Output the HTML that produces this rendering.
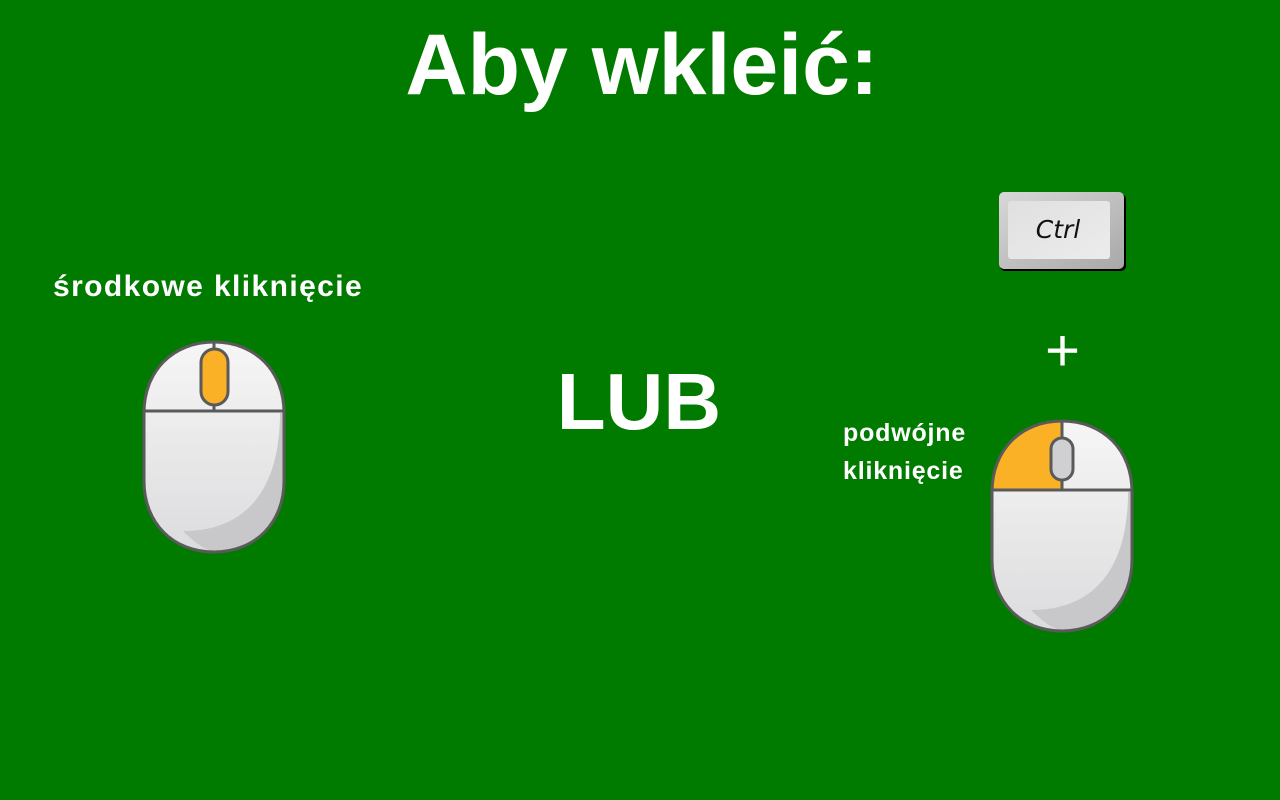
<!DOCTYPE html>
<html><head><meta charset="utf-8"><style>
body{margin:0;width:1280px;height:800px;background:#007b00;overflow:hidden;position:relative;font-family:"Liberation Sans",sans-serif;color:#fff;font-weight:bold}
.t{position:absolute;white-space:nowrap}
</style></head><body>
<div class="t" style="left:0;width:1284px;text-align:center;top:16px;font-size:86px;letter-spacing:0px">Aby wkleić:</div>
<div class="t" style="left:53px;top:270px;font-size:30px;letter-spacing:1.4px">środkowe kliknięcie</div>
<div class="t" style="left:0;width:1278px;text-align:center;top:356px;font-size:80px">LUB</div>
<div class="t" style="left:843px;top:414px;font-size:25px;line-height:38px;letter-spacing:0.8px">podwójne<br>kliknięcie</div>
<div class="t" style="left:1045px;top:316px;font-size:60px;font-weight:normal">+</div>

<svg style="position:absolute;left:998px;top:191px" width="130" height="82" viewBox="0 0 130 82">
<defs><linearGradient id="k" x1="0" y1="0" x2="1" y2="1"><stop offset="0" stop-color="#d8d8d8"/><stop offset="1" stop-color="#a8a8a8"/></linearGradient>
<linearGradient id="k2" x1="0" y1="0" x2="1" y2="1"><stop offset="0" stop-color="#e0e0e0"/><stop offset="1" stop-color="#ececec"/></linearGradient>
<linearGradient id="g" x1="0" y1="0" x2="0" y2="1"><stop offset="0" stop-color="#f6f6f6"/><stop offset="1" stop-color="#dcdcde"/></linearGradient></defs>
<rect x="2" y="3" width="126" height="77" rx="5" fill="#000"/>
<rect x="1" y="1" width="125" height="77" rx="5" fill="url(#k)"/>
<rect x="10" y="10" width="102" height="58" rx="3" fill="url(#k2)"/>
<text x="60" y="47" text-anchor="middle" font-family="DejaVu Sans,sans-serif" font-style="italic" font-weight="normal" font-size="25" fill="#111">Ctrl</text>
</svg>

<svg style="position:absolute;left:142px;top:340px" width="144" height="214" viewBox="-1 -1 144 214">
<path d="M1,72 C1,30 30,1 71,1 C112,1 141,30 141,72 L141,140 C141,182 112,211 71,211 C30,211 1,182 1,140 Z" fill="url(#g)"/>
<path d="M137,72 C137,140 110,190 40,190 C55,205 65,210 71,210 C112,210 140,182 140,140 L140,72 Z" fill="#c8c8ca"/>
<path d="M1,72 C1,30 30,1 71,1 C112,1 141,30 141,72 L141,140 C141,182 112,211 71,211 C30,211 1,182 1,140 Z" fill="none" stroke="#5a5a5a" stroke-width="3"/>
<line x1="1" y1="70" x2="141" y2="70" stroke="#5a5a5a" stroke-width="3"/>
<line x1="71" y1="1" x2="71" y2="70" stroke="#5a5a5a" stroke-width="3"/>
<rect x="58" y="8" width="27" height="56" rx="13.5" fill="#fbb126" stroke="#5a5a5a" stroke-width="3"/>
</svg>

<svg style="position:absolute;left:990px;top:419px" width="144" height="214" viewBox="-1 -1 144 214">
<path d="M1,72 C1,30 30,1 71,1 C112,1 141,30 141,72 L141,140 C141,182 112,211 71,211 C30,211 1,182 1,140 Z" fill="url(#g)"/>
<path d="M137,72 C137,140 110,190 40,190 C55,205 65,210 71,210 C112,210 140,182 140,140 L140,72 Z" fill="#c8c8ca"/>
<path d="M1,70 L1,72 C1,30 30,1 71,1 L71,70 Z" fill="#fbb126"/>
<path d="M1,72 C1,30 30,1 71,1 C112,1 141,30 141,72 L141,140 C141,182 112,211 71,211 C30,211 1,182 1,140 Z" fill="none" stroke="#5a5a5a" stroke-width="3"/>
<line x1="1" y1="70" x2="141" y2="70" stroke="#5a5a5a" stroke-width="3"/>
<line x1="71" y1="1" x2="71" y2="70" stroke="#5a5a5a" stroke-width="3"/>
<rect x="60" y="18" width="22" height="42" rx="11" fill="#d0d0d2" stroke="#5a5a5a" stroke-width="3"/>
</svg>
</body></html>
